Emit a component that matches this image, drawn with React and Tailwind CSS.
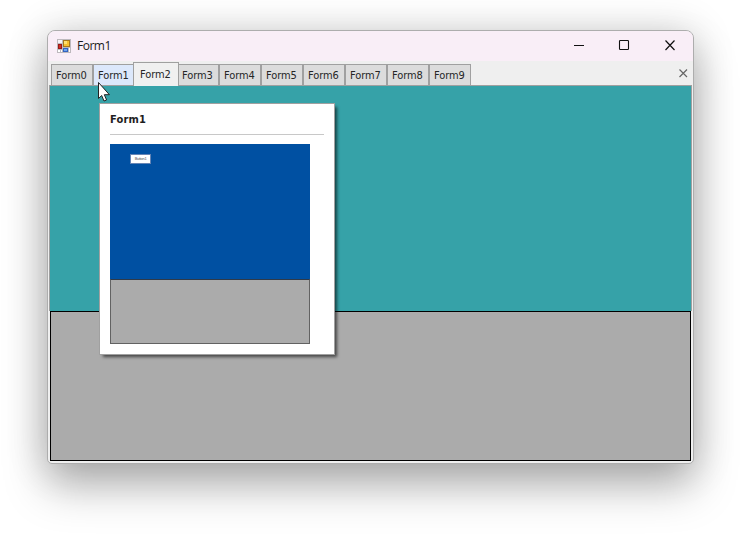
const tabs = ["Form0", "Form1", "Form2", "Form3", "Form4", "Form5", "Form6", "Form7", "Form8", "Form9"];

function AppIcon() {
  return (
    <svg width="14" height="14" viewBox="0 0 14 14" shapeRendering="crispEdges">
      <rect width="14" height="14" fill="#bdb9bd" />
      <rect x="1" y="1" width="4" height="3" fill="#f7f3f7" />
      <rect x="1" y="11" width="2" height="2" fill="#fff" />
      <rect x="4" y="11" width="1" height="2" fill="#fff" />
      <rect x="12" y="9" width="1" height="4" fill="#fff" />
      <rect x="6" y="1" width="7" height="7" fill="#a8781c" />
      <rect x="7" y="2" width="5" height="5" fill="#f8c030" />
      <rect x="7" y="2" width="3" height="3" fill="#ffe070" />
      <rect x="1" y="5" width="4" height="5" fill="#981818" />
      <rect x="2" y="6" width="2" height="3" fill="#d03020" />
      <rect x="6" y="9" width="5" height="4" fill="#3464c0" />
      <rect x="7" y="10" width="3" height="2" fill="#6ca4f0" />
    </svg>
  );
}

function Tab({ label }) {
  const base = "shrink-0 border border-[#a0a0a0] whitespace-nowrap";
  if (label === "Form2")
    return <div className={base + " relative z-10 -mx-px h-[24px] w-[46px] border-b-0 bg-[#f0f0f0] pl-[6px] pt-[5px] leading-[14px]"}>{label}</div>;
  if (label === "Form1")
    return <div className={base + " h-[22px] w-[41px] border-r-0 bg-[#dce8fb] pl-[4px] pt-[4px] leading-[14px]"}>{label}</div>;
  if (label === "Form3")
    return <div className={base + " h-[22px] w-[41px] border-l-0 bg-[#dcdcdc] pl-[4px] pt-[4px] leading-[14px]"}>{label}</div>;
  return <div className={base + " h-[22px] w-[42px] bg-[#dcdcdc] pl-[4px] pt-[4px] leading-[14px]"}>{label}</div>;
}

function Preview() {
  return (
    <div className="absolute left-[99px] top-[103px] z-20 h-[252px] w-[236px] border border-[#a0a0a0] bg-white px-[10px] shadow-[3px_3px_3px_-1px_rgba(0,0,0,0.6)]">
      <div className="h-[31px] border-b border-[#c8c8c8] pt-[9px] font-['DejaVu_Sans_Condensed','DejaVu_Sans',sans-serif] text-[11px] font-bold leading-[14px] tracking-[0.2px] text-[#1e1e1e]">Form1</div>
      <div className="mt-[9px] flex h-[200px] w-[200px] flex-col bg-[#0050a2]">
        <div className="h-[135px] pl-[20px] pt-[10px]">
          <div className="h-[10px] w-[21px] border border-[#6484b5] bg-white text-center font-['Liberation_Sans_Narrow','Liberation_Sans',sans-serif] text-[4px] leading-[8px] tracking-[-0.3px] text-[#555]">Button1</div>
        </div>
        <div className="h-[65px] border border-[#626262] border-t-[#303a48] bg-[#ababab]" />
      </div>
    </div>
  );
}

export default function App() {
  return (
    <div className="relative h-[543px] w-[741px] overflow-hidden bg-white pl-[47px] pt-[30px]">
      <div className="flex h-[434px] w-[647px] flex-col overflow-hidden rounded-t-[8px] rounded-b-[5px] border border-[#adadad] bg-[#efefef] shadow-[0_24px_44px_rgba(0,0,0,0.26),0_2px_40px_rgba(0,0,0,0.19)]">
        <div className="flex h-[30px] shrink-0 items-center bg-[#f9eef7] pl-[9px]">
          <AppIcon />
          <span className="ml-[6px] font-['Open_Sans',sans-serif] text-[12px] leading-[16px] tracking-[-0.5px] text-[#1b1b1b]">Form1</span>
          <svg className="ml-auto mr-[17px]" width="103" height="12" viewBox="0 0 103 12" fill="none" stroke="#111">
            <path d="M1 5.5h10" />
            <rect x="46.5" y="0.5" width="9" height="9" rx="0.8" strokeWidth="1.1" />
            <path d="M92.5 0.500l9 9.500M101.500 0.500L92.500 10" strokeWidth="1.2" />
          </svg>
        </div>
        <div className="relative z-10 flex h-[25px] shrink-0 items-end pl-[3px] font-['DejaVu_Sans_Condensed','DejaVu_Sans',sans-serif] text-[11px] tracking-[-0.1px] text-[#262626]">
          {tabs.map((t) => <Tab key={t} label={t} />)}
          <svg className="mb-[8px] ml-auto mr-[5px]" width="10" height="10" viewBox="0 0 10 10" fill="none" stroke="#666" strokeWidth="1.2">
            <path d="M1.500 1.500l7.500 7.500M9 1.500L1.500 9" />
          </svg>
        </div>
        <div className="-mt-px ml-px mr-px flex h-[376px] shrink-0 flex-col">
          <div className="h-[226px] border-x border-t border-[#a0a0a0] bg-[#36a2a8]" />
          <div className="ml-px mr-px h-[150px] border border-black bg-[#ababab]" />
        </div>
      </div>
      <Preview />
      <svg className="absolute left-[98px] top-[82px] z-30" width="13" height="20" viewBox="0 0 13 20">
        <path d="M.5.5v16l3.200-3 2.300 5.500 2.600-1-2.300-5.300h5.100z" fill="#fff" stroke="#222" strokeWidth="1" />
      </svg>
    </div>
  );
}
